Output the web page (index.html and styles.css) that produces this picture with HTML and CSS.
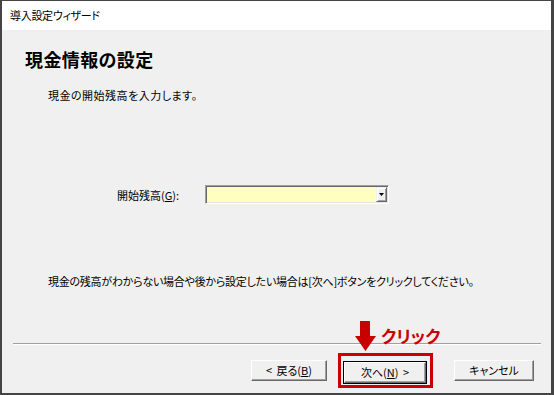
FILE: index.html
```html
<!DOCTYPE html>
<html lang="ja">
<head>
<meta charset="utf-8">
<link rel="stylesheet" href="styles.css">
</head>
<body>
<div class="window">
  <div class="titlebar">導入設定ウィザード</div>
  <div class="content">
    <h1 class="heading">現金情報の設定</h1>
    <p class="intro">現金の開始残高を入力します。</p>
    <div class="field">
      <span class="label">開始残高(<u>G</u>):</span>
      <div class="combo"><span class="combo-btn"><svg width="5" height="3" viewBox="0 0 5 3"><path d="M0 0h5L2.5 3z" fill="#000"/></svg></span></div>
    </div>
    <p class="note">現金の残高がわからない場合や後から設定したい場合は[次へ]ボタンをクリックしてください。</p>
    <div class="separator"></div>
    <div class="buttons">
      <button class="btn">&lt; 戻る(<u>B</u>)</button>
      <span class="highlight"><button class="btn default">次へ(<u>N</u>) &gt;</button></span>
      <button class="btn cancel">キャンセル</button>
    </div>
    <div class="callout">
      <svg class="arrow" width="21" height="30" viewBox="0 0 21 30"><path d="M5 0h10v15h6L10.5 30 0 15h5z" fill="#c80000"/></svg>
      <span class="callout-text">クリック</span>
    </div>
  </div>
</div>
</body>
</html>
```
FILE: styles.css
```css
* { box-sizing: border-box; }
html, body { margin: 0; padding: 0; }
body {
  width: 554px;
  height: 395px;
  font-family: "Noto Sans CJK JP", "Noto Sans", sans-serif;
  font-feature-settings: "palt";
  color: #000;
  background: #fff;
}
.window {
  width: 554px;
  height: 395px;
  border-style: solid;
  border-color: #444;
  border-width: 1px 3px 2px 2px;
  display: flex;
  flex-direction: column;
}
.titlebar {
  height: 29px;
  line-height: 29px;
  background: #fff;
  padding-left: 8px;
  font-size: 11px;
  letter-spacing: -0.3px;
}
.content {
  position: relative;
  flex: 1;
  background: #f0f0f0;
  display: flex;
  flex-direction: column;
}
.heading {
  margin: 17px 0 0 23px;
  font-size: 18px;
  line-height: 24px;
  font-weight: bold;
  letter-spacing: 0.4px;
}
.intro {
  margin: 16px 0 0 46px;
  font-size: 11px;
  line-height: 16px;
  letter-spacing: 0.5px;
}
.field {
  margin-top: 82px;
  display: flex;
  align-items: center;
  height: 19px;
}
.label {
  margin-left: 115px;
  width: 88px;
  font-size: 11px;
  line-height: 16px;
}
.label u { text-decoration-thickness: 1px; text-underline-offset: 1px; }
.combo {
  width: 184px;
  height: 19px;
  background: #ffffc0;
  border-style: solid;
  border-width: 1px;
  border-color: #a0a0a0 #fff #fff #a0a0a0;
  box-shadow: inset 1px 1px 0 #696969, inset -1px -1px 0 #e3e3e3;
  display: flex;
  justify-content: flex-end;
  padding: 1px 1px 1px 1px;
}
.combo-btn {
  width: 11px;
  height: 15px;
  background: #f0f0f0;
  border-style: solid;
  border-width: 1px;
  border-color: #f0f0f0 #696969 #696969 #f0f0f0;
  box-shadow: inset 1px 1px 0 #fff, inset -1px -1px 0 #a0a0a0;
  display: flex;
  align-items: center;
  justify-content: center;
}
.note {
  margin: 69px 0 0 46px;
  font-size: 11px;
  line-height: 16px;
  letter-spacing: -0.25px;
}
.separator {
  margin: 54px 0 0 11px;
  width: 528px;
  height: 2px;
  border-top: 1px solid #a0a0a0;
  border-bottom: 1px solid #fff;
}
.buttons {
  margin-top: 13px;
  display: flex;
  align-items: center;
  padding-left: 249px;
}
.btn {
  height: 21px;
  padding: 0;
  font-family: inherit;
  font-feature-settings: "palt";
  font-size: 11px;
  line-height: 17px;
  background: #f0f0f0;
  border-style: solid;
  border-width: 1px;
  border-color: #fff #696969 #696969 #fff;
  box-shadow: inset -1px -1px 0 #a0a0a0;
  color: #000;
  width: 76px;
  word-spacing: 2px;
}
.btn u { text-decoration-thickness: 1px; text-underline-offset: 1px; }
.highlight {
  position: relative;
  margin-left: 17px;
}
.highlight::after {
  content: "";
  position: absolute;
  left: -6px;
  right: -7px;
  top: -5px;
  bottom: -5px;
  border: 3px solid #c80000;
}
.btn.default {
  width: 82px;
  outline: 1px solid #000;
  outline-offset: 0;
}
.cancel {
  margin-left: 28px;
  width: 80px;
}
.callout {
  position: absolute;
  left: 353px;
  top: 291px;
  display: flex;
  align-items: flex-start;
}
.arrow { display: block; }
.callout-text {
  margin: 5px 0 0 5px;
  color: #c80000;
  font-weight: bold;
  font-size: 17px;
  line-height: 20px;
  letter-spacing: 0;
}
```
